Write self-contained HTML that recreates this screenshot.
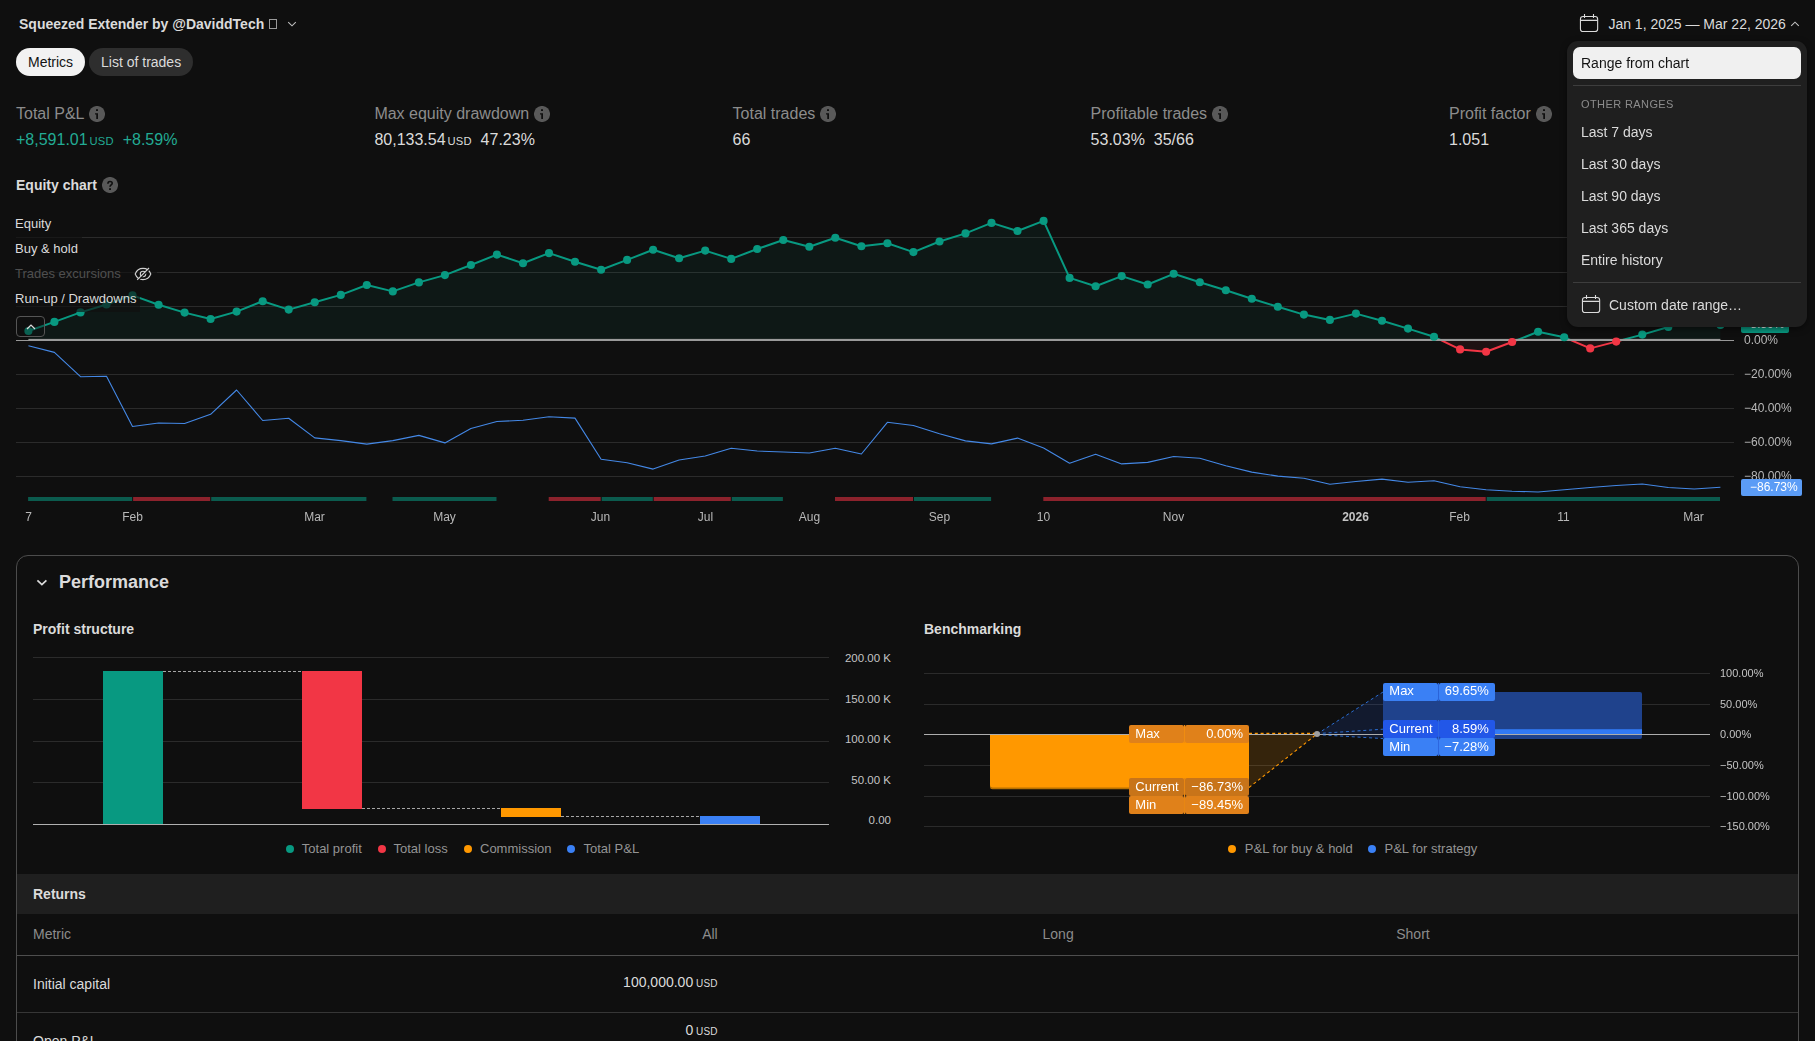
<!DOCTYPE html>
<html lang="en">
<head>
<meta charset="utf-8">
<title>Strategy report</title>
<style>
*{box-sizing:border-box;margin:0;padding:0}
html,body{width:1815px;height:1041px;overflow:hidden;background:#0f0f0f}
body{font-family:"Liberation Sans",sans-serif;color:#dbdbdb;font-size:14px;position:relative}
.abs{position:absolute}
.t{position:absolute;white-space:nowrap;line-height:1}
.b{font-weight:bold}
/* header */
.title{left:19px;top:17px;font-size:14px;font-weight:bold;color:#dbdbdb}
.pill{position:absolute;top:48px;height:28px;border-radius:14px;font-size:14px;line-height:28px;padding:0 12px;white-space:nowrap}
.pill.on{left:16px;width:69px;background:#f2f2f2;color:#131313}
.pill.off{left:89px;width:104px;background:#2e2e2e;color:#dbdbdb}
/* metrics */
.ml{font-size:16px;color:#8c8c8c;top:106px}
.mv{font-size:16px;color:#dbdbdb;top:132px}
.usd{font-size:11.2px;letter-spacing:0.2px;margin-left:-1.4px}
.grn{color:#22ab94}
.ico{position:absolute;width:16px;height:16px;border-radius:8px;background:#4a4a4a}
/* chart legend */
.lg{font-size:13px;color:#dbdbdb;left:15px}
.xl{position:absolute;top:510px;width:61px;text-align:center;font-size:12px;color:#b8b8b8;line-height:14px;white-space:nowrap}
.xl.b{font-weight:bold;color:#c4c4c4}
.yl{position:absolute;left:1744px;font-size:12px;color:#b8b8b8;line-height:16px;white-space:nowrap}
/* dropdown */
.dd{position:absolute;left:1567px;top:41px;width:240px;height:285.5px;background:#1f1f1f;border-radius:11px;box-shadow:0 2px 6px rgba(0,0,0,.5)}
.dd .it{position:absolute;left:14px;font-size:14px;color:#dbdbdb;line-height:16px;white-space:nowrap}
.sep{position:absolute;left:6px;width:228px;height:1px;background:#3d3d3d}
/* performance panel */
.panel{position:absolute;left:16px;top:555px;width:1783px;height:520px;border:1px solid #4c4c4c;border-radius:12px}
.h2{font-size:18px;font-weight:bold;color:#dbdbdb}
.h3{font-size:14px;font-weight:bold;color:#dbdbdb}
.al{position:absolute;font-size:11.5px;color:#c4c4c4;line-height:14px;white-space:nowrap}
.lgd{position:absolute;font-size:13px;color:#949494;line-height:16px;white-space:nowrap}
.dot{position:absolute;width:8px;height:8px;border-radius:4px}
.tag{position:absolute;height:18px;color:#fff;font-size:13px;line-height:18px;white-space:nowrap}
.tag span{position:absolute;top:0}
.xl,.yl,.gs,.tag,.ptag,.dd{will-change:transform}
</style>
</head>
<body>

<!-- ===== header ===== -->
<div class="t title">Squeezed Extender by @DaviddTech</div>
<div class="abs" style="left:269px;top:19px;width:8px;height:10px;border:1px solid #9a9a9a"></div>
<svg class="abs" style="left:286px;top:19px" width="12" height="10" viewBox="0 0 12 10"><path d="M2.2 3.2 L6 6.8 L9.8 3.2" fill="none" stroke="#c0c0c0" stroke-width="1.1"/></svg>

<div class="pill on">Metrics</div>
<div class="pill off">List of trades</div>

<!-- date range button -->
<svg class="abs" style="left:1579px;top:12px" width="20" height="22" viewBox="0 0 20 22"><g fill="none" stroke="#dbdbdb" stroke-width="1.1"><rect x="1.45" y="4.45" width="17.2" height="15.1" rx="2.6"/><path d="M1.45 8.4H18.65M5.5 2V5.9M14.5 2V5.9"/></g></svg>
<div class="t" style="left:1608.4px;top:17px;font-size:14px;color:#dbdbdb">Jan 1, 2025 — Mar 22, 2026</div>
<svg class="abs" style="left:1789px;top:19px" width="12" height="10" viewBox="0 0 12 10"><path d="M2.2 6.8 L6 3.2 L9.8 6.8" fill="none" stroke="#c0c0c0" stroke-width="1.1"/></svg>

<!-- ===== metrics row ===== -->
<div class="t ml" style="left:16px">Total P&amp;L</div>
<div class="t mv grn" style="left:16px">+8,591.01<span class="usd"> USD</span>&nbsp; +8.59%</div>
<div class="t ml" style="left:374.4px">Max equity drawdown</div>
<div class="t mv" style="left:374.4px">80,133.54<span class="usd"> USD</span>&nbsp; 47.23%</div>
<div class="t ml" style="left:732.6px">Total trades</div>
<div class="t mv" style="left:732.6px">66</div>
<div class="t ml" style="left:1090.6px">Profitable trades</div>
<div class="t mv" style="left:1090.6px">53.03%&nbsp; 35/66</div>
<div class="t ml" style="left:1449px">Profit factor</div>
<div class="t mv" style="left:1449px">1.051</div>

<!-- info icons -->
<svg class="abs" style="left:89px;top:105.85px" width="16" height="16" viewBox="0 0 16 16"><circle cx="8" cy="8" r="8.05" fill="#595959"/><path d="M7 3.3h2v1.7h-2zM6 7.3h3v5.6h-1.75v-4.4h-1.25z" fill="#0f0f0f"/></svg>
<svg class="abs" style="left:534px;top:105.85px" width="16" height="16" viewBox="0 0 16 16"><circle cx="8" cy="8" r="8.05" fill="#595959"/><path d="M7 3.3h2v1.7h-2zM6 7.3h3v5.6h-1.75v-4.4h-1.25z" fill="#0f0f0f"/></svg>
<svg class="abs" style="left:820px;top:105.85px" width="16" height="16" viewBox="0 0 16 16"><circle cx="8" cy="8" r="8.05" fill="#595959"/><path d="M7 3.3h2v1.7h-2zM6 7.3h3v5.6h-1.75v-4.4h-1.25z" fill="#0f0f0f"/></svg>
<svg class="abs" style="left:1212px;top:105.85px" width="16" height="16" viewBox="0 0 16 16"><circle cx="8" cy="8" r="8.05" fill="#595959"/><path d="M7 3.3h2v1.7h-2zM6 7.3h3v5.6h-1.75v-4.4h-1.25z" fill="#0f0f0f"/></svg>
<svg class="abs" style="left:1536px;top:105.85px" width="16" height="16" viewBox="0 0 16 16"><circle cx="8" cy="8" r="8.05" fill="#595959"/><path d="M7 3.3h2v1.7h-2zM6 7.3h3v5.6h-1.75v-4.4h-1.25z" fill="#0f0f0f"/></svg>

<!-- ===== equity chart ===== -->
<div class="t h3" style="left:16px;top:178px">Equity chart</div>
<svg class="abs" style="left:102px;top:177px" width="16" height="16" viewBox="0 0 16 16"><circle cx="8" cy="8" r="8.05" fill="#595959"/><path d="M5.9 6.7C5.9 3.9 10.2 3.9 10.2 6.3C10.2 7.9 8 8 8 9.8" fill="none" stroke="#0f0f0f" stroke-width="1.6"/><rect x="7.1" y="11.2" width="1.9" height="1.8" fill="#0f0f0f"/></svg>

<svg class="abs" style="left:0;top:200px" width="1815" height="340" viewBox="0 200 1815 340">
<line x1="16" x2="1734" y1="237.5" y2="237.5" stroke="#2b2b2b" stroke-width="1"/>
<line x1="16" x2="1734" y1="272.5" y2="272.5" stroke="#2b2b2b" stroke-width="1"/>
<line x1="16" x2="1734" y1="306.5" y2="306.5" stroke="#2b2b2b" stroke-width="1"/>
<line x1="16" x2="1734" y1="374.5" y2="374.5" stroke="#2b2b2b" stroke-width="1"/>
<line x1="16" x2="1734" y1="408.5" y2="408.5" stroke="#2b2b2b" stroke-width="1"/>
<line x1="16" x2="1734" y1="442.5" y2="442.5" stroke="#2b2b2b" stroke-width="1"/>
<line x1="16" x2="1734" y1="476.5" y2="476.5" stroke="#2b2b2b" stroke-width="1"/>
<defs><clipPath id="above"><rect x="0" y="200" width="1815" height="140"/></clipPath><clipPath id="below"><rect x="0" y="340" width="1815" height="200"/></clipPath></defs>
<polygon points="28.4,340.0 28.4,331.0 54.4,321.9 80.5,312.4 106.5,304.5 132.5,295.4 158.6,304.7 184.6,312.6 210.6,319.0 236.6,311.6 262.7,301.2 288.7,309.6 314.7,302.2 340.8,294.9 366.8,285.0 392.8,291.4 418.9,282.4 444.9,275.1 470.9,265.0 496.9,254.6 523.0,263.2 549.0,253.1 575.0,261.7 601.1,269.8 627.1,259.9 653.1,249.8 679.1,258.2 705.2,250.6 731.2,258.9 757.2,249.0 783.3,240.0 809.3,246.8 835.3,237.7 861.4,246.3 887.4,243.3 913.4,252.1 939.5,241.5 965.5,233.4 991.5,222.9 1017.5,231.0 1043.6,220.9 1069.6,277.9 1095.6,286.3 1121.7,276.1 1147.7,284.5 1173.7,273.8 1199.8,282.2 1225.8,290.3 1251.8,298.7 1277.8,306.8 1303.9,314.6 1329.9,319.9 1355.9,313.6 1382.0,320.7 1408.0,328.6 1434.0,336.8 1460.1,349.4 1486.1,351.8 1512.1,342.0 1538.1,331.8 1564.2,337.3 1590.2,348.4 1616.2,341.6 1642.3,334.6 1668.3,327.0 1694.3,320.0 1720.4,324.9 1720.4,340.0" fill="#089981" fill-opacity="0.07" clip-path="url(#above)"/>
<polygon points="28.4,340.0 28.4,331.0 54.4,321.9 80.5,312.4 106.5,304.5 132.5,295.4 158.6,304.7 184.6,312.6 210.6,319.0 236.6,311.6 262.7,301.2 288.7,309.6 314.7,302.2 340.8,294.9 366.8,285.0 392.8,291.4 418.9,282.4 444.9,275.1 470.9,265.0 496.9,254.6 523.0,263.2 549.0,253.1 575.0,261.7 601.1,269.8 627.1,259.9 653.1,249.8 679.1,258.2 705.2,250.6 731.2,258.9 757.2,249.0 783.3,240.0 809.3,246.8 835.3,237.7 861.4,246.3 887.4,243.3 913.4,252.1 939.5,241.5 965.5,233.4 991.5,222.9 1017.5,231.0 1043.6,220.9 1069.6,277.9 1095.6,286.3 1121.7,276.1 1147.7,284.5 1173.7,273.8 1199.8,282.2 1225.8,290.3 1251.8,298.7 1277.8,306.8 1303.9,314.6 1329.9,319.9 1355.9,313.6 1382.0,320.7 1408.0,328.6 1434.0,336.8 1460.1,349.4 1486.1,351.8 1512.1,342.0 1538.1,331.8 1564.2,337.3 1590.2,348.4 1616.2,341.6 1642.3,334.6 1668.3,327.0 1694.3,320.0 1720.4,324.9 1720.4,340.0" fill="#f23645" fill-opacity="0.07" clip-path="url(#below)"/>
<polyline points="28.4,331.0 54.4,321.9 80.5,312.4 106.5,304.5 132.5,295.4 158.6,304.7 184.6,312.6 210.6,319.0 236.6,311.6 262.7,301.2 288.7,309.6 314.7,302.2 340.8,294.9 366.8,285.0 392.8,291.4 418.9,282.4 444.9,275.1 470.9,265.0 496.9,254.6 523.0,263.2 549.0,253.1 575.0,261.7 601.1,269.8 627.1,259.9 653.1,249.8 679.1,258.2 705.2,250.6 731.2,258.9 757.2,249.0 783.3,240.0 809.3,246.8 835.3,237.7 861.4,246.3 887.4,243.3 913.4,252.1 939.5,241.5 965.5,233.4 991.5,222.9 1017.5,231.0 1043.6,220.9 1069.6,277.9 1095.6,286.3 1121.7,276.1 1147.7,284.5 1173.7,273.8 1199.8,282.2 1225.8,290.3 1251.8,298.7 1277.8,306.8 1303.9,314.6 1329.9,319.9 1355.9,313.6 1382.0,320.7 1408.0,328.6 1434.0,336.8 1460.1,349.4 1486.1,351.8 1512.1,342.0 1538.1,331.8 1564.2,337.3 1590.2,348.4 1616.2,341.6 1642.3,334.6 1668.3,327.0 1694.3,320.0 1720.4,324.9" fill="none" stroke="#089981" stroke-width="2" stroke-linejoin="round" clip-path="url(#above)"/>
<polyline points="28.4,331.0 54.4,321.9 80.5,312.4 106.5,304.5 132.5,295.4 158.6,304.7 184.6,312.6 210.6,319.0 236.6,311.6 262.7,301.2 288.7,309.6 314.7,302.2 340.8,294.9 366.8,285.0 392.8,291.4 418.9,282.4 444.9,275.1 470.9,265.0 496.9,254.6 523.0,263.2 549.0,253.1 575.0,261.7 601.1,269.8 627.1,259.9 653.1,249.8 679.1,258.2 705.2,250.6 731.2,258.9 757.2,249.0 783.3,240.0 809.3,246.8 835.3,237.7 861.4,246.3 887.4,243.3 913.4,252.1 939.5,241.5 965.5,233.4 991.5,222.9 1017.5,231.0 1043.6,220.9 1069.6,277.9 1095.6,286.3 1121.7,276.1 1147.7,284.5 1173.7,273.8 1199.8,282.2 1225.8,290.3 1251.8,298.7 1277.8,306.8 1303.9,314.6 1329.9,319.9 1355.9,313.6 1382.0,320.7 1408.0,328.6 1434.0,336.8 1460.1,349.4 1486.1,351.8 1512.1,342.0 1538.1,331.8 1564.2,337.3 1590.2,348.4 1616.2,341.6 1642.3,334.6 1668.3,327.0 1694.3,320.0 1720.4,324.9" fill="none" stroke="#f23645" stroke-width="2" stroke-linejoin="round" clip-path="url(#below)"/>
<rect x="16" y="340" width="1718" height="1" fill="#989898"/>
<rect x="28.4" y="338.9" width="1692.0" height="2.1" fill="#9a9a9a"/>
<circle cx="28.4" cy="331.0" r="4.05" fill="#089981"/>
<circle cx="54.4" cy="321.9" r="4.05" fill="#089981"/>
<circle cx="80.5" cy="312.4" r="4.05" fill="#089981"/>
<circle cx="106.5" cy="304.5" r="4.05" fill="#089981"/>
<circle cx="132.5" cy="295.4" r="4.05" fill="#089981"/>
<circle cx="158.6" cy="304.7" r="4.05" fill="#089981"/>
<circle cx="184.6" cy="312.6" r="4.05" fill="#089981"/>
<circle cx="210.6" cy="319.0" r="4.05" fill="#089981"/>
<circle cx="236.6" cy="311.6" r="4.05" fill="#089981"/>
<circle cx="262.7" cy="301.2" r="4.05" fill="#089981"/>
<circle cx="288.7" cy="309.6" r="4.05" fill="#089981"/>
<circle cx="314.7" cy="302.2" r="4.05" fill="#089981"/>
<circle cx="340.8" cy="294.9" r="4.05" fill="#089981"/>
<circle cx="366.8" cy="285.0" r="4.05" fill="#089981"/>
<circle cx="392.8" cy="291.4" r="4.05" fill="#089981"/>
<circle cx="418.9" cy="282.4" r="4.05" fill="#089981"/>
<circle cx="444.9" cy="275.1" r="4.05" fill="#089981"/>
<circle cx="470.9" cy="265.0" r="4.05" fill="#089981"/>
<circle cx="496.9" cy="254.6" r="4.05" fill="#089981"/>
<circle cx="523.0" cy="263.2" r="4.05" fill="#089981"/>
<circle cx="549.0" cy="253.1" r="4.05" fill="#089981"/>
<circle cx="575.0" cy="261.7" r="4.05" fill="#089981"/>
<circle cx="601.1" cy="269.8" r="4.05" fill="#089981"/>
<circle cx="627.1" cy="259.9" r="4.05" fill="#089981"/>
<circle cx="653.1" cy="249.8" r="4.05" fill="#089981"/>
<circle cx="679.1" cy="258.2" r="4.05" fill="#089981"/>
<circle cx="705.2" cy="250.6" r="4.05" fill="#089981"/>
<circle cx="731.2" cy="258.9" r="4.05" fill="#089981"/>
<circle cx="757.2" cy="249.0" r="4.05" fill="#089981"/>
<circle cx="783.3" cy="240.0" r="4.05" fill="#089981"/>
<circle cx="809.3" cy="246.8" r="4.05" fill="#089981"/>
<circle cx="835.3" cy="237.7" r="4.05" fill="#089981"/>
<circle cx="861.4" cy="246.3" r="4.05" fill="#089981"/>
<circle cx="887.4" cy="243.3" r="4.05" fill="#089981"/>
<circle cx="913.4" cy="252.1" r="4.05" fill="#089981"/>
<circle cx="939.5" cy="241.5" r="4.05" fill="#089981"/>
<circle cx="965.5" cy="233.4" r="4.05" fill="#089981"/>
<circle cx="991.5" cy="222.9" r="4.05" fill="#089981"/>
<circle cx="1017.5" cy="231.0" r="4.05" fill="#089981"/>
<circle cx="1043.6" cy="220.9" r="4.05" fill="#089981"/>
<circle cx="1069.6" cy="277.9" r="4.05" fill="#089981"/>
<circle cx="1095.6" cy="286.3" r="4.05" fill="#089981"/>
<circle cx="1121.7" cy="276.1" r="4.05" fill="#089981"/>
<circle cx="1147.7" cy="284.5" r="4.05" fill="#089981"/>
<circle cx="1173.7" cy="273.8" r="4.05" fill="#089981"/>
<circle cx="1199.8" cy="282.2" r="4.05" fill="#089981"/>
<circle cx="1225.8" cy="290.3" r="4.05" fill="#089981"/>
<circle cx="1251.8" cy="298.7" r="4.05" fill="#089981"/>
<circle cx="1277.8" cy="306.8" r="4.05" fill="#089981"/>
<circle cx="1303.9" cy="314.6" r="4.05" fill="#089981"/>
<circle cx="1329.9" cy="319.9" r="4.05" fill="#089981"/>
<circle cx="1355.9" cy="313.6" r="4.05" fill="#089981"/>
<circle cx="1382.0" cy="320.7" r="4.05" fill="#089981"/>
<circle cx="1408.0" cy="328.6" r="4.05" fill="#089981"/>
<circle cx="1434.0" cy="336.8" r="4.05" fill="#089981"/>
<circle cx="1460.1" cy="349.4" r="4.05" fill="#f23645"/>
<circle cx="1486.1" cy="351.8" r="4.05" fill="#f23645"/>
<circle cx="1512.1" cy="342.0" r="4.05" fill="#f23645"/>
<circle cx="1538.1" cy="331.8" r="4.05" fill="#089981"/>
<circle cx="1564.2" cy="337.3" r="4.05" fill="#089981"/>
<circle cx="1590.2" cy="348.4" r="4.05" fill="#f23645"/>
<circle cx="1616.2" cy="341.6" r="4.05" fill="#f23645"/>
<circle cx="1642.3" cy="334.6" r="4.05" fill="#089981"/>
<circle cx="1668.3" cy="327.0" r="4.05" fill="#089981"/>
<circle cx="1694.3" cy="320.0" r="4.05" fill="#089981"/>
<circle cx="1720.4" cy="324.9" r="4.05" fill="#089981"/>
<polyline points="28.4,345.7 54.4,352.4 80.5,376.7 106.5,376.2 132.5,426.5 158.6,423.0 184.6,423.5 210.6,414.3 236.6,390.0 262.7,420.5 288.7,418.3 314.7,437.9 340.8,440.6 366.8,444.1 392.8,440.6 418.9,435.4 444.9,442.9 470.9,428.5 496.9,421.5 523.0,420.3 549.0,416.8 575.0,418.1 601.1,459.2 627.1,462.7 653.1,469.1 679.1,460.0 705.2,456.0 731.2,448.3 757.2,451.0 783.3,452.0 809.3,453.0 835.3,448.3 861.4,454.0 887.4,422.3 913.4,425.5 939.5,433.7 965.5,440.9 991.5,443.9 1017.5,438.1 1043.6,448.1 1069.6,463.2 1095.6,454.3 1121.7,463.9 1147.7,462.4 1173.7,456.5 1199.8,458.2 1225.8,465.7 1251.8,472.1 1277.8,476.1 1303.9,478.3 1329.9,484.3 1355.9,481.5 1382.0,479.1 1408.0,482.3 1434.0,480.8 1460.1,486.7 1486.1,489.7 1512.1,491.2 1538.1,492.0 1564.2,489.7 1590.2,487.5 1616.2,485.5 1642.3,484.0 1668.3,487.5 1694.3,489.0 1720.4,487.2" fill="none" stroke="#4488e6" stroke-width="1.1" stroke-linejoin="round"/>
<rect x="28.1" y="497" width="104.0" height="4" fill="#0b5b4e"/>
<rect x="133.1" y="497" width="77.1" height="4" fill="#8c222c"/>
<rect x="211.2" y="497" width="155.2" height="4" fill="#0b5b4e"/>
<rect x="392.5" y="497" width="104.0" height="4" fill="#0b5b4e"/>
<rect x="548.7" y="497" width="52.0" height="4" fill="#8c222c"/>
<rect x="601.7" y="497" width="51.1" height="4" fill="#0b5b4e"/>
<rect x="653.7" y="497" width="77.1" height="4" fill="#8c222c"/>
<rect x="731.8" y="497" width="51.1" height="4" fill="#0b5b4e"/>
<rect x="835.0" y="497" width="78.0" height="4" fill="#8c222c"/>
<rect x="914.0" y="497" width="77.1" height="4" fill="#0b5b4e"/>
<rect x="1043.3" y="497" width="442.4" height="4" fill="#8c222c"/>
<rect x="1486.7" y="497" width="233.3" height="4" fill="#0b5b4e"/>
</svg>
<div class="xl" style="left:-2px">7</div>
<div class="xl" style="left:102px">Feb</div>
<div class="xl" style="left:284px">Mar</div>
<div class="xl" style="left:414px">May</div>
<div class="xl" style="left:570px">Jun</div>
<div class="xl" style="left:675px">Jul</div>
<div class="xl" style="left:779px">Aug</div>
<div class="xl" style="left:909px">Sep</div>
<div class="xl" style="left:1013px">10</div>
<div class="xl" style="left:1143px">Nov</div>
<div class="xl b" style="left:1325px">2026</div>
<div class="xl" style="left:1429px">Feb</div>
<div class="xl" style="left:1533px">11</div>
<div class="xl" style="left:1663px">Mar</div>
<div class="yl" style="top:332px">0.00%</div>
<div class="yl" style="top:366px">−20.00%</div>
<div class="yl" style="top:400px">−40.00%</div>
<div class="yl" style="top:434px">−60.00%</div>
<div class="yl" style="top:468px">−80.00%</div>

<!-- price tags -->
<div class="abs ptag" style="left:1741px;top:316px;width:47.5px;height:17px;background:#089981;border-radius:2px;color:#fff;font-size:12px;line-height:17px;padding-left:9.5px">8.59%</div>
<div class="abs ptag" style="left:1741px;top:479px;width:61px;height:17px;background:#5b9cf6;border-radius:2px;color:#fff;font-size:12px;line-height:17px;padding-left:9px">−86.73%</div>

<!-- legend -->
<div class="abs" style="left:12px;top:211.5px;width:50px;height:25px;background:rgba(15,15,15,.64)"></div>
<div class="abs" style="left:12px;top:236.5px;width:70px;height:25px;background:rgba(15,15,15,.64)"></div>
<div class="abs" style="left:12px;top:261.5px;width:145px;height:25px;background:rgba(15,15,15,.64)"></div>
<div class="abs" style="left:12px;top:286.5px;width:128px;height:25px;background:rgba(15,15,15,.64)"></div>
<div class="t lg" style="top:217px">Equity</div>
<div class="t lg" style="top:242px">Buy &amp; hold</div>
<div class="t lg" style="top:267px;color:#4f4f4f">Trades excursions</div>
<svg class="abs" style="left:134px;top:266px" width="18" height="16" viewBox="0 0 18 16"><g fill="none" stroke="#d0d0d0" stroke-width="1.12"><path d="M1.2 8C2.6 4.4 5.6 2.4 9 2.4S15.4 4.4 16.8 8C15.4 11.6 12.4 13.6 9 13.6S2.6 11.6 1.2 8Z"/><circle cx="9" cy="8" r="2.7"/><path d="M4.1 14.4L15.9 2.6" stroke="#0f0f0f" stroke-width="1.4"/><path d="M3.2 13.8L15 2"/></g></svg>
<div class="t lg" style="top:292px">Run-up / Drawdowns</div>
<div class="abs" style="left:16px;top:316px;width:29px;height:21px;border:1px solid #555;border-radius:4px;background:rgba(15,15,15,.4)"></div>
<svg class="abs" style="left:24.5px;top:321.5px" width="12" height="10" viewBox="0 0 12 10"><path d="M2 7 L6 3.1 L10 7" fill="none" stroke="#dbdbdb" stroke-width="1.3"/></svg>

<!-- ===== performance panel ===== -->
<div class="panel"></div>
<svg class="abs" style="left:35px;top:577px" width="14" height="10" viewBox="0 0 14 10"><path d="M2.4 3.3 L6.9 7.6 L11.4 3.3" fill="none" stroke="#dbdbdb" stroke-width="1.7"/></svg>
<div class="t h2" style="left:59px;top:573px">Performance</div>
<div class="t h3" style="left:33px;top:622px">Profit structure</div>
<div class="t h3" style="left:924px;top:622px">Benchmarking</div>

<!-- profit structure chart -->
<svg class="abs" style="left:0;top:640px" width="910" height="200" viewBox="0 640 910 200">
<g stroke="#2b2b2b" stroke-width="1"><line x1="33" x2="829" y1="657.5" y2="657.5"/><line x1="33" x2="829" y1="699.5" y2="699.5"/><line x1="33" x2="829" y1="741.5" y2="741.5"/><line x1="33" x2="829" y1="782.5" y2="782.5"/></g>
<line x1="33" x2="829" y1="824.5" y2="824.5" stroke="#b0b0b0" stroke-width="1"/>
<rect x="103" y="671" width="60" height="153" fill="#089981"/>
<rect x="302" y="671" width="60" height="138" fill="#f23645"/>
<rect x="501" y="808" width="60" height="9" fill="#ff9800"/>
<rect x="700" y="816" width="60" height="8" fill="#3a80f5"/>
<g stroke="#a6a6a6" stroke-width="1" stroke-dasharray="3 2"><line x1="163" x2="302" y1="671.5" y2="671.5"/><line x1="362" x2="501" y1="808.5" y2="808.5"/><line x1="561" x2="700" y1="816.5" y2="816.5"/></g>
</svg>
<div class="al" style="left:831px;top:651px;width:60px;text-align:right">200.00 K</div>
<div class="al" style="left:831px;top:692px;width:60px;text-align:right">150.00 K</div>
<div class="al" style="left:831px;top:732px;width:60px;text-align:right">100.00 K</div>
<div class="al" style="left:831px;top:773px;width:60px;text-align:right">50.00 K</div>
<div class="al" style="left:831px;top:813px;width:60px;text-align:right">0.00</div>

<div class="dot" style="left:286px;top:844.6px;background:#089981"></div><div class="lgd" style="left:301.8px;top:841px">Total profit</div>
<div class="dot" style="left:378px;top:844.6px;background:#f23645"></div><div class="lgd" style="left:393.5px;top:841px">Total loss</div>
<div class="dot" style="left:464px;top:844.6px;background:#ff9800"></div><div class="lgd" style="left:480px;top:841px">Commission</div>
<div class="dot" style="left:567px;top:844.6px;background:#3a80f5"></div><div class="lgd" style="left:583.5px;top:841px">Total P&amp;L</div>

<!-- benchmarking chart -->
<svg class="abs" style="left:910px;top:640px" width="905" height="200" viewBox="910 640 905 200">
<g stroke="#2b2b2b" stroke-width="1"><line x1="924" x2="1710" y1="673.5" y2="673.5"/><line x1="924" x2="1710" y1="704.5" y2="704.5"/><line x1="924" x2="1710" y1="765.5" y2="765.5"/><line x1="924" x2="1710" y1="796.5" y2="796.5"/><line x1="924" x2="1710" y1="826.5" y2="826.5"/></g>
<!-- orange -->
<polygon points="1249,734 1317,734 1249,787.5" fill="#ff9800" fill-opacity="0.16"/>
<path d="M990 735H1249V789.2H992.5Q990 789.2 990 786.7Z" fill="#b87100"/>
<path d="M990 735H1249V787.4H992.5Q990 787.4 990 785Z" fill="#ff9800"/>
<!-- blue -->
<polygon points="1317,734 1383,692 1383,738.5" fill="#2962ff" fill-opacity="0.13"/>
<rect x="1383" y="692" width="259" height="47" rx="2" fill="#1f428c"/>
<rect x="1383" y="729.2" width="259" height="5" fill="#3179f5"/>
<line x1="924" x2="1710" y1="734.5" y2="734.5" stroke="#adadad" stroke-width="1"/>
<g stroke="#ff9800" stroke-width="1.1" stroke-dasharray="3 2.8" fill="none"><line x1="1249" y1="733.4" x2="1317" y2="733.4"/><line x1="1249" y1="787.5" x2="1317" y2="734"/></g>
<g stroke="#2f7df0" stroke-width="1" stroke-dasharray="3 2.8" fill="none" stroke-opacity="0.85"><line x1="1317" y1="734" x2="1383" y2="692"/><line x1="1317" y1="733.6" x2="1383" y2="729.2"/><line x1="1317" y1="734.6" x2="1383" y2="738.6"/></g>
<circle cx="1317" cy="734" r="3" fill="#9e9e9e"/>
</svg>
<!-- tags -->
<div class="tag" style="left:1129px;top:725px;width:55px;background:#e0811a;border-radius:2px"><span style="left:6.3px">Max</span></div>
<div class="tag" style="left:1185px;top:725px;width:64px;background:#e0811a;border-radius:2px"><span style="right:6px">0.00%</span></div>
<div class="tag" style="left:1129px;top:778px;width:55px;background:#c87419;border-radius:2px"><span style="left:6.3px">Current</span></div>
<div class="tag" style="left:1185px;top:778px;width:64px;background:#c87419;border-radius:2px"><span style="right:6px">−86.73%</span></div>
<div class="tag" style="left:1129px;top:796px;width:55px;background:#e0811a;border-radius:2px"><span style="left:6.3px">Min</span></div>
<div class="tag" style="left:1185px;top:796px;width:64px;background:#e0811a;border-radius:2px"><span style="right:6px">−89.45%</span></div>
<div class="abs" style="left:1184px;top:725px;width:1px;height:18px;background:#f08c10"></div>
<div class="abs" style="left:1184px;top:778px;width:1px;height:36px;background:#e88612"></div>
<div class="tag" style="left:1383px;top:683px;width:55px;background:#3a80f5;border-radius:2px"><span style="left:6.3px;top:-0.8px">Max</span></div>
<div class="tag" style="left:1439px;top:683px;width:56px;background:#3a80f5;border-radius:2px"><span style="right:6.2px;top:-0.8px">69.65%</span></div>
<div class="tag" style="left:1383px;top:720px;width:55px;background:#2257e8;border-radius:2px"><span style="left:6.3px">Current</span></div>
<div class="tag" style="left:1439px;top:720px;width:56px;background:#2257e8;border-radius:2px"><span style="right:6.2px">8.59%</span></div>
<div class="tag" style="left:1383px;top:738px;width:55px;background:#3a80f5;border-radius:2px"><span style="left:6.3px">Min</span></div>
<div class="tag" style="left:1439px;top:738px;width:56px;background:#3a80f5;border-radius:2px"><span style="right:6.2px">−7.28%</span></div>
<div class="abs" style="left:1438px;top:683px;width:1px;height:18px;background:#2a63d8"></div>
<div class="abs" style="left:1438px;top:720px;width:1px;height:36px;background:#2c66e0"></div>

<div class="al gs" style="left:1720px;top:666px;font-size:11px">100.00%</div>
<div class="al gs" style="left:1720px;top:697px;font-size:11px">50.00%</div>
<div class="al gs" style="left:1720px;top:727px;font-size:11px">0.00%</div>
<div class="al gs" style="left:1720px;top:758px;font-size:11px">−50.00%</div>
<div class="al gs" style="left:1720px;top:789px;font-size:11px">−100.00%</div>
<div class="al gs" style="left:1720px;top:819px;font-size:11px">−150.00%</div>

<div class="dot" style="left:1228px;top:844.6px;background:#ff9800"></div><div class="lgd" style="left:1244.8px;top:841px">P&amp;L for buy &amp; hold</div>
<div class="dot" style="left:1368px;top:844.6px;background:#3a80f5"></div><div class="lgd" style="left:1384.5px;top:841px">P&amp;L for strategy</div>

<!-- returns table -->
<div class="abs" style="left:17px;top:874px;width:1781px;height:40px;background:#1f1f1f"></div>
<div class="t h3" style="left:33px;top:887px">Returns</div>
<div class="t" style="left:33px;top:927px;font-size:14px;color:#8c8c8c">Metric</div>
<div class="t" style="left:617.7px;width:100px;text-align:right;top:927px;font-size:14px;color:#8c8c8c">All</div>
<div class="t" style="left:973.7px;width:100px;text-align:right;top:927px;font-size:14px;color:#8c8c8c">Long</div>
<div class="t" style="left:1329.7px;width:100px;text-align:right;top:927px;font-size:14px;color:#8c8c8c">Short</div>
<div class="abs" style="left:17px;top:955px;width:1781px;height:1px;background:#4e4e4e"></div>
<div class="t" style="left:33px;top:977px;font-size:14px;color:#dbdbdb">Initial capital</div>
<div class="t" style="left:517.7px;width:200px;text-align:right;top:975px;font-size:14px;color:#dbdbdb">100,000.00<span class="usd" style="font-size:10px;margin-left:0;letter-spacing:0.15px"> USD</span></div>
<div class="abs" style="left:17px;top:1012px;width:1781px;height:1px;background:#363636"></div>
<div class="t" style="left:33px;top:1033.7px;font-size:14px;color:#dbdbdb">Open P&amp;L</div>
<div class="t" style="left:517.7px;width:200px;text-align:right;top:1023px;font-size:14px;color:#dbdbdb">0<span class="usd" style="font-size:10px;margin-left:0;letter-spacing:0.15px"> USD</span></div>

<!-- ===== dropdown menu ===== -->
<div class="dd">
  <div class="abs" style="left:6px;top:6px;width:228px;height:32px;border-radius:7px;background:#f0f0f0"></div>
  <div class="it" style="top:14px;color:#131313">Range from chart</div>
  <div class="sep" style="top:44px"></div>
  <div class="it" style="top:55px;font-size:11px;color:#8c8c8c;letter-spacing:.4px">OTHER RANGES</div>
  <div class="it" style="top:83px">Last 7 days</div>
  <div class="it" style="top:115px">Last 30 days</div>
  <div class="it" style="top:147px">Last 90 days</div>
  <div class="it" style="top:179px">Last 365 days</div>
  <div class="it" style="top:211px">Entire history</div>
  <div class="sep" style="top:241px"></div>
  <svg class="abs" style="left:14px;top:252px" width="20" height="22" viewBox="0 0 20 22"><g fill="none" stroke="#dbdbdb" stroke-width="1.1"><rect x="1.45" y="4.45" width="17.2" height="15.1" rx="2.6"/><path d="M1.45 8.4H18.65M5.5 2V5.9M14.5 2V5.9"/></g></svg>
  <div class="it" style="left:42px;top:256px">Custom date range…</div>
</div>

</body>
</html>
